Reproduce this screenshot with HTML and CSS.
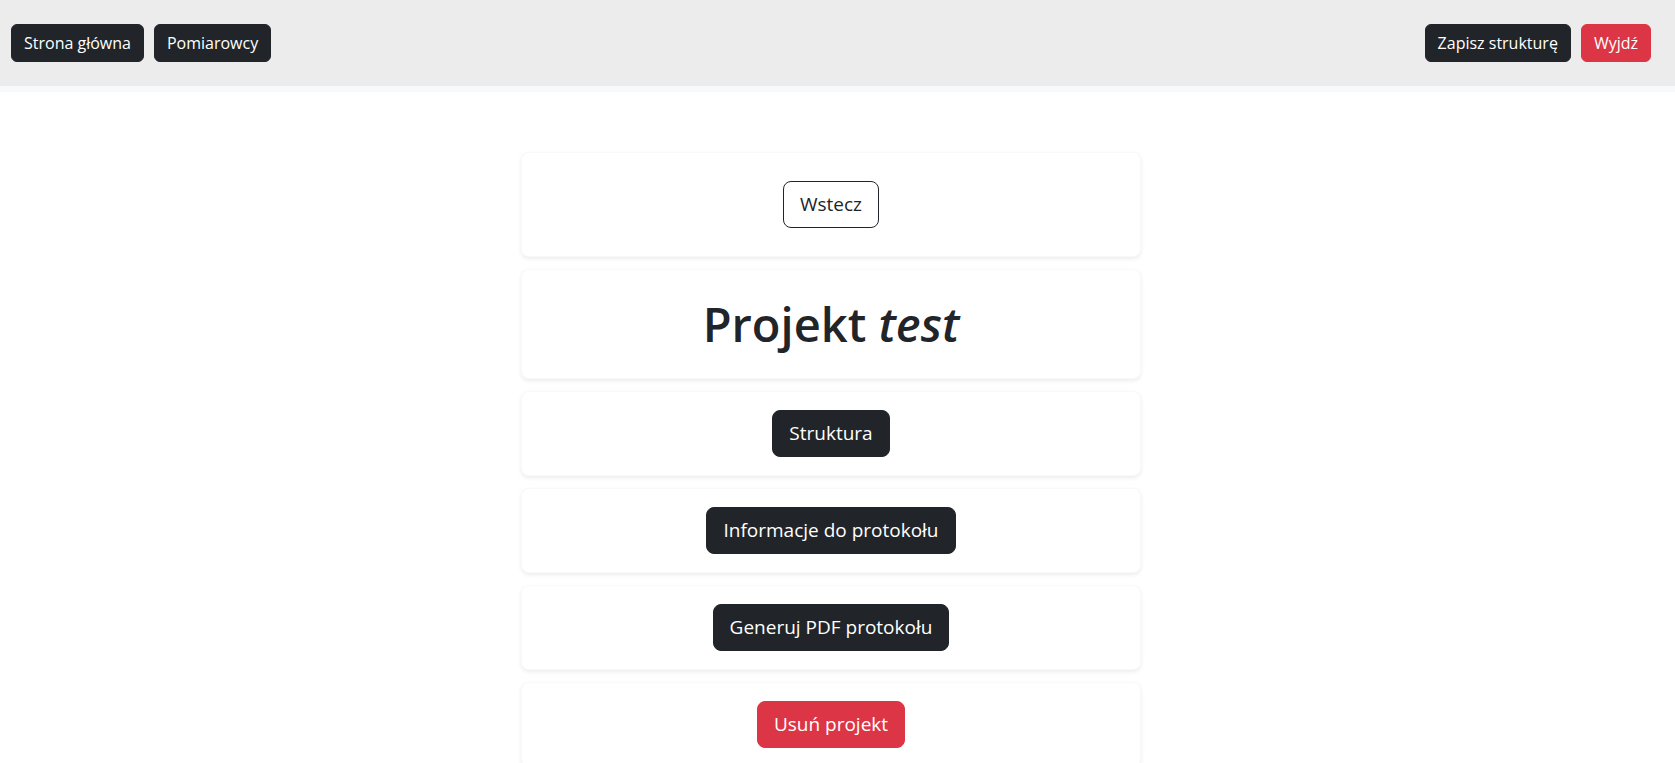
FILE: index.html
```html
<!DOCTYPE html>
<html lang="pl">
<head>
<meta charset="utf-8">
<title>Projekt test</title>
<link rel="stylesheet" href="styles.css">
</head>
<body>
<header class="topbar">
  <nav class="nav-group">
    <a class="btn btn-dark" href="#">Strona główna</a>
    <a class="btn btn-dark" href="#">Pomiarowcy</a>
  </nav>
  <div class="nav-group">
    <button class="btn btn-dark" type="button">Zapisz strukturę</button>
    <button class="btn btn-danger" type="button">Wyjdź</button>
  </div>
</header>
<div class="strip"></div>
<main class="content">
  <section class="card card-back">
    <button class="btn btn-lg btn-outline" type="button">Wstecz</button>
  </section>
  <section class="card card-title">
    <h1 class="title">Projekt <em>test</em></h1>
  </section>
  <section class="card card-action">
    <button class="btn btn-lg btn-dark" type="button">Struktura</button>
  </section>
  <section class="card card-action">
    <button class="btn btn-lg btn-dark" type="button">Informacje do protokołu</button>
  </section>
  <section class="card card-action">
    <button class="btn btn-lg btn-dark" type="button">Generuj PDF protokołu</button>
  </section>
  <section class="card card-action">
    <button class="btn btn-lg btn-danger" type="button">Usuń projekt</button>
  </section>
</main>
</body>
</html>
```

FILE: styles.css
```css
* { box-sizing: border-box; }

html, body {
  margin: 0;
  padding: 0;
  background: #ffffff;
  color: #212529;
  font-family: "Open Sans", "Noto Sans", "DejaVu Sans", sans-serif;
}

.topbar {
  height: 86px;
  background: #ececec;
  display: flex;
  align-items: center;
  justify-content: space-between;
  padding: 0 24px 0 11px;
}

.strip {
  height: 6px;
  background: #f8f9fa;
}

.nav-group {
  display: flex;
  gap: 10px;
}

.btn {
  display: inline-block;
  font-family: inherit;
  font-size: 16px;
  line-height: 24px;
  padding: 6px 12px;
  border: 1px solid transparent;
  border-radius: 6px;
  text-decoration: none;
  cursor: pointer;
  white-space: nowrap;
}

.btn-dark {
  background: #212529;
  border-color: #212529;
  color: #ffffff;
}

.btn-danger {
  background: #dc3545;
  border-color: #dc3545;
  color: #ffffff;
}

.btn-outline {
  background: #ffffff;
  border-color: #212529;
  color: #212529;
}

.btn-lg {
  font-size: 19px;
  line-height: 29px;
  padding: 8px 16px;
  border-radius: 8px;
}

.content {
  display: flex;
  flex-direction: column;
  align-items: center;
  gap: 12px;
  padding: 60px 13px 0 0;
}

.card {
  width: 620px;
  background: #ffffff;
  border: 1px solid rgba(0, 0, 0, 0.025);
  border-radius: 8px;
  box-shadow: 0 2px 4px rgba(0, 0, 0, 0.075);
  display: flex;
  align-items: center;
  justify-content: center;
}

.card-back { height: 105px; }
.card-title { height: 110px; }
.card-action { height: 85px; }

.title {
  margin: 0;
  font-size: 47px;
  font-weight: 600;
  line-height: 1.2;
}

.title em {
  font-style: italic;
}
```
